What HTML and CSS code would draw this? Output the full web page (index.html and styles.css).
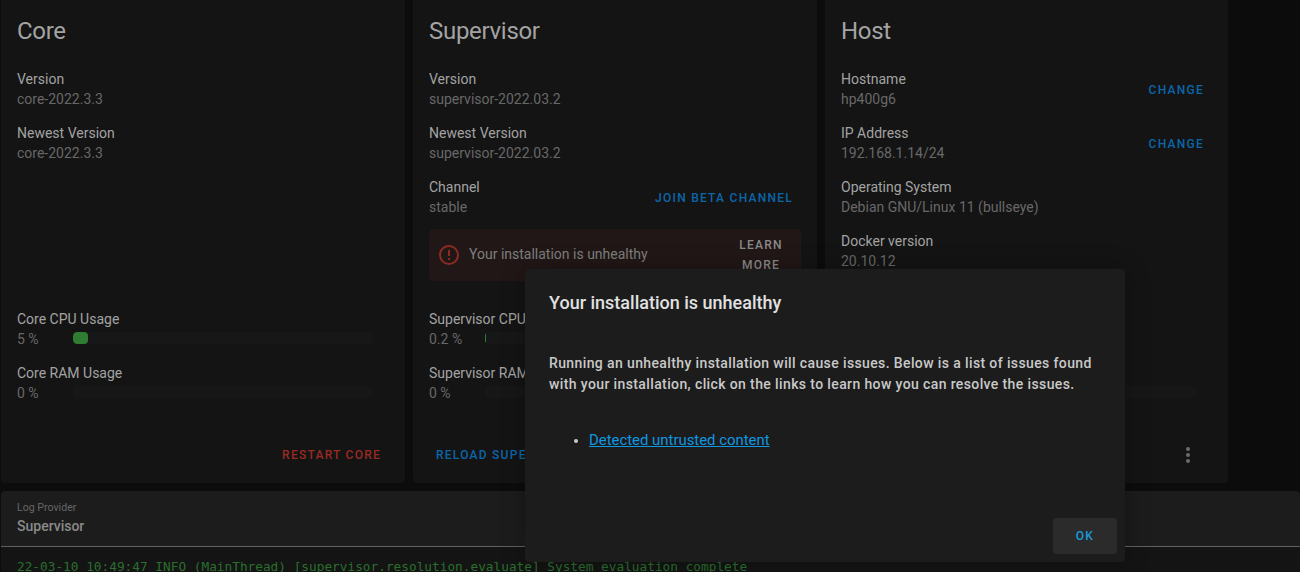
FILE: index.html
```html
<!DOCTYPE html>
<html lang="en">
<head>
    <meta charset="UTF-8">
    <meta name="viewport" content="width=device-width, initial-scale=1.0">
    <title>System</title>
    <link rel="stylesheet" href="styles.css">
</head>
<body>
    <div class="cards">
        <div class="card">
            <h2>Core</h2>
            <div class="rows">
                <div class="row"><div><div class="label">Version</div><div class="value">core-2022.3.3</div></div></div>
                <div class="row"><div><div class="label">Newest Version</div><div class="value">core-2022.3.3</div></div></div>
            </div>
            <div class="meters">
                <div class="meter">
                    <div class="label">Core CPU Usage</div>
                    <div class="meter-line"><span class="value">5 %</span><div class="track"><div class="fill" style="width: 5%"></div></div></div>
                </div>
                <div class="meter">
                    <div class="label">Core RAM Usage</div>
                    <div class="meter-line"><span class="value">0 %</span><div class="track"></div></div>
                </div>
            </div>
            <div class="actions end"><a class="btn red">Restart Core</a></div>
        </div>

        <div class="card">
            <h2>Supervisor</h2>
            <div class="rows">
                <div class="row"><div><div class="label">Version</div><div class="value">supervisor-2022.03.2</div></div></div>
                <div class="row"><div><div class="label">Newest Version</div><div class="value">supervisor-2022.03.2</div></div></div>
                <div class="row"><div><div class="label">Channel</div><div class="value">stable</div></div><a class="btn blue">Join Beta Channel</a></div>
            </div>
            <div class="alert">
                <svg class="alert-icon" viewBox="0 0 24 24" width="24" height="24"><path d="M11,15H13V17H11V15M11,7H13V13H11V7M12,2C6.47,2 2,6.5 2,12A10,10 0 0,0 12,22A10,10 0 0,0 22,12A10,10 0 0,0 12,2M12,20A8,8 0 0,1 4,12A8,8 0 0,1 12,4A8,8 0 0,1 20,12A8,8 0 0,1 12,20Z"/></svg>
                <span class="alert-text">Your installation is unhealthy</span>
                <a class="btn grey alert-btn">Learn more</a>
            </div>
            <div class="meters">
                <div class="meter">
                    <div class="label">Supervisor CPU</div>
                    <div class="meter-line"><span class="value">0.2 %</span><div class="track"><div class="fill" style="width: 0.2%"></div></div></div>
                </div>
                <div class="meter">
                    <div class="label">Supervisor RAM</div>
                    <div class="meter-line"><span class="value">0 %</span><div class="track"></div></div>
                </div>
            </div>
            <div class="actions"><a class="btn blue">Reload Supervisor</a></div>
        </div>

        <div class="card">
            <h2>Host</h2>
            <div class="rows">
                <div class="row"><div><div class="label">Hostname</div><div class="value">hp400g6</div></div><a class="btn blue">Change</a></div>
                <div class="row"><div><div class="label">IP Address</div><div class="value">192.168.1.14/24</div></div><a class="btn blue">Change</a></div>
                <div class="row"><div><div class="label">Operating System</div><div class="value">Debian GNU/Linux 11 (bullseye)</div></div></div>
                <div class="row"><div><div class="label">Docker version</div><div class="value">20.10.12</div></div></div>
            </div>
            <div class="meters">
                <div class="meter">
                    <div class="meter-line host-line"><div class="track"></div></div>
                </div>
            </div>
            <div class="actions end">
                <svg class="more" viewBox="0 0 24 24" width="24" height="24"><path d="M12,16A2,2 0 0,1 14,18A2,2 0 0,1 12,20A2,2 0 0,1 10,18A2,2 0 0,1 12,16M12,10A2,2 0 0,1 14,12A2,2 0 0,1 12,14A2,2 0 0,1 10,12A2,2 0 0,1 12,10M12,4A2,2 0 0,1 14,6A2,2 0 0,1 12,8A2,2 0 0,1 10,6A2,2 0 0,1 12,4Z"/></svg>
            </div>
        </div>
    </div>

    <div class="log-card">
        <div class="log-select">
            <div class="log-label">Log Provider</div>
            <div class="log-name">Supervisor</div>
        </div>
        <pre class="log-text">22-03-10 10:49:47 INFO (MainThread) [supervisor.resolution.evaluate] System evaluation complete</pre>
    </div>

    <div class="dialog">
        <h3>Your installation is unhealthy</h3>
        <p>Running an unhealthy installation will cause issues. Below is a list of issues found with your installation, click on the links to learn how you can resolve the issues.</p>
        <ul>
            <li><a href="#">Detected untrusted content</a></li>
        </ul>
        <div class="dialog-actions"><a class="btn ok">OK</a></div>
    </div>
</body>
</html>
```

FILE: styles.css
```css
html, body {
    height: 100%;
}
body {
    margin: 0;
    padding: 0 0 0 1px;
    box-sizing: border-box;
    overflow: hidden;
    background-color: #0c0c0c;
    font-family: Roboto, "Liberation Sans", sans-serif;
    font-size: 14px;
    line-height: 20px;
}
.cards {
    display: grid;
    grid-template-columns: 404px 404px 403px;
    gap: 8px;
    height: 483px;
}
.card {
    display: flex;
    flex-direction: column;
    padding: 0 16px;
    background-color: #141414;
    border-radius: 0 0 4px 4px;
}
h2 {
    margin: 15px 0 22px;
    font-size: 24px;
    line-height: 32px;
    font-weight: 400;
    letter-spacing: -0.3px;
    color: #a3a3a3;
}
.rows {
    display: flex;
    flex-direction: column;
    gap: 14px;
}
.row {
    display: flex;
    justify-content: space-between;
    align-items: center;
    height: 40px;
}
.label {
    color: #a3a3a3;
}
.value {
    color: #686868;
}
.btn {
    margin: 2px 8px 0 0;
    font-size: 12px;
    font-weight: 500;
    letter-spacing: 1.25px;
    text-transform: uppercase;
}
.blue {
    color: #0b66a9;
}
.red {
    color: #9a2a22;
}
.grey {
    color: #8a8a8a;
}
.alert {
    display: flex;
    align-items: center;
    height: 52px;
    margin-top: 12px;
    padding: 0 8px;
    box-sizing: border-box;
    background-color: #211716;
    border-radius: 4px;
}
.alert-icon {
    fill: #8c2b24;
    flex: none;
}
.alert-text {
    flex: 1;
    margin: -2px 0 0 8px;
    color: #7f7f7f;
}
.alert-btn {
    width: 72px;
    margin: 0 -4px 0 0;
    text-align: center;
}
.meters {
    display: flex;
    flex-direction: column;
    gap: 14px;
    margin-top: auto;
}
.meter-line {
    display: flex;
    align-items: center;
    height: 20px;
    margin-right: 16px;
}
.meter-line .value {
    width: 56px;
    flex: none;
}
.host-line {
    padding-left: 56px;
}
.track {
    flex: 1;
    height: 12px;
    margin-top: -2px;
    background-color: #171717;
    border-radius: 4px;
    overflow: hidden;
}
.fill {
    height: 100%;
    background-color: #2e7d32;
    border-radius: 4px;
}
.actions {
    display: flex;
    align-items: center;
    height: 40px;
    margin: 32px -1px 8px 0;
}
.actions.end {
    justify-content: flex-end;
}
.actions .btn {
    margin: 0 9px 0 7px;
}
.more {
    fill: #6b6b6b;
    margin-right: 13px;
}
.log-card {
    margin-top: 8px;
    background-color: #1c1c1c;
    border-radius: 4px 4px 0 0;
}
.log-select {
    height: 56px;
    padding: 9px 16px 0;
    box-sizing: border-box;
    border-bottom: 1px solid #616161;
}
.log-label {
    font-size: 10.6px;
    line-height: 16px;
    color: #666666;
}
.log-name {
    font-weight: 500;
    line-height: 20px;
    color: #8a8a8a;
}
.log-text {
    margin: 0;
    padding: 10px 16px;
    background-color: #141414;
    font-family: "DejaVu Sans Mono", monospace;
    font-size: 12.78px;
    line-height: 20px;
    color: #2a6f2e;
}
/* dialog sits on top of the dimmed page */
.dialog {
    position: absolute;
    left: 525px;
    top: 269px;
    width: 600px;
    height: 293px;
    padding: 0 24px;
    box-sizing: border-box;
    background-color: #1c1c1c;
    border-radius: 4px;
    box-shadow: 0 0 24px rgba(0, 0, 0, 0.3);
    color: #c9c9c9;
}
.dialog h3 {
    margin: 20px 0 0;
    font-size: 18px;
    line-height: 28px;
    font-weight: 500;
    color: #e1e1e1;
}
.dialog p {
    margin: 36px 0 0;
    font-weight: 500;
    line-height: 21px;
    letter-spacing: 0.38px;
}
.dialog ul {
    margin: 35px 0 0;
    padding-left: 40px;
}
.dialog li {
    line-height: 21px;
}
.dialog li a {
    color: #1097e0;
    font-size: 14.9px;
    font-weight: 400;
}
.dialog-actions {
    position: absolute;
    right: 8px;
    bottom: 8px;
}
.ok {
    display: block;
    width: 64px;
    height: 36px;
    margin: 0;
    background-color: #2b2b2b;
    border-radius: 4px;
    color: #1a9ad9;
    line-height: 36px;
    text-align: center;
}
```
